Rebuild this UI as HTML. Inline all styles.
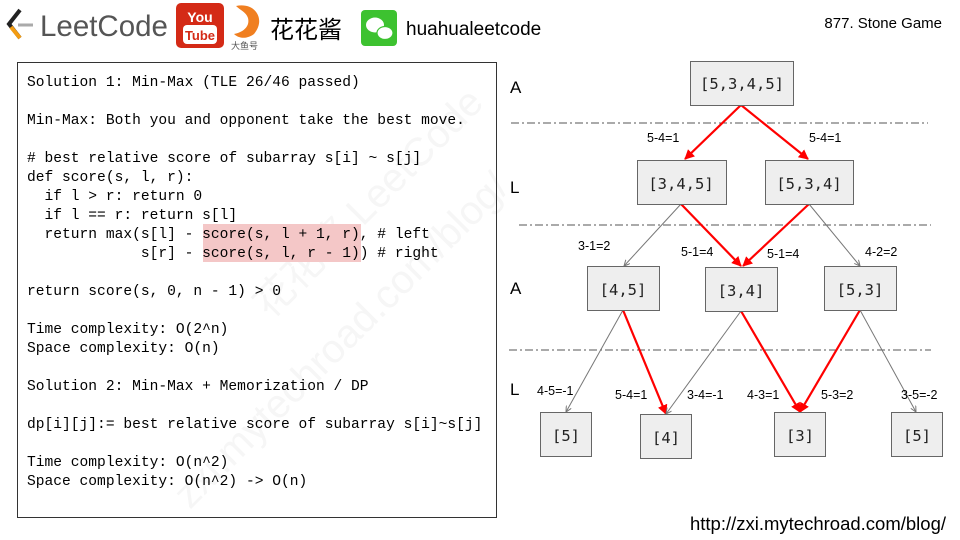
<!DOCTYPE html>
<html><head><meta charset="utf-8"><style>
html,body{margin:0;padding:0;background:#fff;width:960px;height:540px;overflow:hidden}
svg{display:block}
.m{font-family:"Liberation Mono",monospace;font-size:14.6px;fill:#000}
.s{font-family:"Liberation Sans",sans-serif;fill:#000}
.b{fill:#eee;stroke:#666;stroke-width:1}
.bt{font-family:"DejaVu Sans Mono","Liberation Mono",monospace;font-size:15.5px;fill:#222;text-anchor:middle}
.r{stroke:#f00;stroke-width:2.2;fill:none}
.g{stroke:#777;stroke-width:1;fill:none}
.d{stroke:#555;stroke-width:1;stroke-dasharray:8,3,2,3}
.l{font-family:"Liberation Sans",sans-serif;font-size:12.5px;fill:#000}
</style></head><body>
<svg width="960" height="540" xmlns="http://www.w3.org/2000/svg">
<defs>
<marker id="ar" markerWidth="10" markerHeight="10" refX="9" refY="5" orient="auto" markerUnits="userSpaceOnUse" viewBox="0 0 10 10"><path d="M0,0 L10,5 L0,10z" fill="#f00"/></marker>
<marker id="ag" markerWidth="6" markerHeight="6" refX="6" refY="3" orient="auto" markerUnits="userSpaceOnUse" viewBox="0 0 6 6"><path d="M0,0 L6,3 L0,6" fill="none" stroke="#777"/></marker>
</defs>
<!-- header -->
<path d="M20,10 L9,24 L20,38" stroke="#222" stroke-width="4" fill="none"/>
<path d="M11,27 L20,38" stroke="#f39c12" stroke-width="4"/>
<line x1="18" y1="25" x2="33" y2="25" stroke="#aaa" stroke-width="3"/>
<text x="40" y="36" class="s" font-size="29.5" style="fill:#555">LeetCode</text>
<rect x="176" y="3" width="48" height="45" rx="5" fill="#d42a16"/>
<text x="200" y="22" class="s" font-size="14" font-weight="bold" text-anchor="middle" style="fill:#fff">You</text>
<rect x="183" y="25" width="34" height="19" rx="4" fill="#fff"/>
<text x="200" y="40" class="s" font-size="13" font-weight="bold" text-anchor="middle" style="fill:#d42a16">Tube</text>
<path d="M236,6 C256,2 266,20 254,34 C246,40 238,38 234,34 C244,32 250,26 248,18 C246,12 240,10 236,6z" fill="#f07f20"/>
<text x="231" y="49" class="s" font-size="9" style="fill:#555">大鱼号</text>
<text x="270" y="38" font-family="Noto Sans CJK SC,sans-serif" font-size="24" fill="#000">花花酱</text>
<rect x="361" y="10" width="36" height="36" rx="4" fill="#3dc230"/>
<ellipse cx="375" cy="25" rx="9" ry="7.5" fill="#fff"/>
<ellipse cx="385" cy="33" rx="8" ry="6.5" fill="#fff" stroke="#3dc230" stroke-width="1.2"/>
<text x="406" y="35" class="s" font-size="19">huahualeetcode</text>
<text x="942" y="28" class="s" font-size="15" text-anchor="end">877. Stone Game</text>
<!-- watermark -->
<text x="0" y="0" transform="translate(270,320) rotate(-45)" class="s" font-size="40" style="fill:#f6f6f6">花花酱 LeetCode</text>
<text x="0" y="0" transform="translate(190,510) rotate(-45)" class="s" font-size="40" style="fill:#f6f6f6">zxi.mytechroad.com/blog/</text>
<!-- code box -->
<rect x="17.5" y="62.5" width="479" height="455" fill="none" stroke="#333"/>
<rect x="203" y="224" width="158" height="19" fill="#f4c7c7"/>
<rect x="203" y="243" width="158" height="19" fill="#f4c7c7"/>
<text x="27" y="86" class="m">Solution 1: Min-Max (TLE 26/46 passed)</text>
<text x="27" y="124" class="m">Min-Max: Both you and opponent take the best move.</text>
<text x="27" y="162" class="m"># best relative score of subarray s[i] ~ s[j]</text>
<text x="27" y="181" class="m">def score(s, l, r):</text>
<text x="27" y="200" class="m" xml:space="preserve">  if l &gt; r: return 0</text>
<text x="27" y="219" class="m" xml:space="preserve">  if l == r: return s[l]</text>
<text x="27" y="238" class="m" xml:space="preserve">  return max(s[l] - score(s, l + 1, r), # left</text>
<text x="27" y="257" class="m" xml:space="preserve">             s[r] - score(s, l, r - 1)) # right</text>
<text x="27" y="295" class="m">return score(s, 0, n - 1) &gt; 0</text>
<text x="27" y="333" class="m">Time complexity: O(2^n)</text>
<text x="27" y="352" class="m">Space complexity: O(n)</text>
<text x="27" y="390" class="m">Solution 2: Min-Max + Memorization / DP</text>
<text x="27" y="428" class="m">dp[i][j]:= best relative score of subarray s[i]~s[j]</text>
<text x="27" y="466" class="m">Time complexity: O(n^2)</text>
<text x="27" y="485" class="m">Space complexity: O(n^2) -&gt; O(n)</text>
<!-- tree -->
<text x="510" y="93" class="s" font-size="17">A</text>
<text x="510" y="193" class="s" font-size="17">L</text>
<text x="510" y="294" class="s" font-size="17">A</text>
<text x="510" y="395" class="s" font-size="17">L</text>
<line x1="511" y1="123" x2="928" y2="123" class="d"/>
<line x1="519" y1="225" x2="931" y2="225" class="d"/>
<line x1="509" y1="350" x2="931" y2="350" class="d"/>
<line x1="741" y1="105" x2="685" y2="159" class="r" marker-end="url(#ar)"/>
<line x1="741" y1="105" x2="808" y2="159" class="r" marker-end="url(#ar)"/>
<line x1="681" y1="204" x2="624" y2="266" class="g" marker-end="url(#ag)"/>
<line x1="681" y1="204" x2="741" y2="266" class="r" marker-end="url(#ar)"/>
<line x1="809" y1="204" x2="743" y2="266" class="r" marker-end="url(#ar)"/>
<line x1="809" y1="204" x2="860" y2="266" class="g" marker-end="url(#ag)"/>
<line x1="623" y1="310" x2="566" y2="412" class="g" marker-end="url(#ag)"/>
<line x1="623" y1="310" x2="666" y2="414" class="r" marker-end="url(#ar)"/>
<line x1="741" y1="311" x2="666" y2="414" class="g" marker-end="url(#ag)"/>
<line x1="741" y1="311" x2="800" y2="412" class="r" marker-end="url(#ar)"/>
<line x1="860" y1="310" x2="800" y2="412" class="r" marker-end="url(#ar)"/>
<line x1="860" y1="310" x2="916" y2="412" class="g" marker-end="url(#ag)"/>
<rect x="690.5" y="61.5" width="103" height="44" class="b"/><text x="742" y="89" class="bt">[5,3,4,5]</text>
<rect x="637.5" y="160.5" width="89" height="44" class="b"/><text x="681" y="189" class="bt">[3,4,5]</text>
<rect x="765.5" y="160.5" width="88" height="44" class="b"/><text x="809" y="189" class="bt">[5,3,4]</text>
<rect x="587.5" y="266.5" width="72" height="44" class="b"/><text x="623" y="295" class="bt">[4,5]</text>
<rect x="705.5" y="267.5" width="72" height="44" class="b"/><text x="741" y="296" class="bt">[3,4]</text>
<rect x="824.5" y="266.5" width="72" height="44" class="b"/><text x="860" y="295" class="bt">[5,3]</text>
<rect x="540.5" y="412.5" width="51" height="44" class="b"/><text x="566" y="441" class="bt">[5]</text>
<rect x="640.5" y="414.5" width="51" height="44" class="b"/><text x="666" y="443" class="bt">[4]</text>
<rect x="774.5" y="412.5" width="51" height="44" class="b"/><text x="800" y="441" class="bt">[3]</text>
<rect x="891.5" y="412.5" width="51" height="44" class="b"/><text x="917" y="441" class="bt">[5]</text>
<text x="647" y="142" class="l">5-4=1</text>
<text x="809" y="142" class="l">5-4=1</text>
<text x="578" y="250" class="l">3-1=2</text>
<text x="681" y="256" class="l">5-1=4</text>
<text x="767" y="258" class="l">5-1=4</text>
<text x="865" y="256" class="l">4-2=2</text>
<text x="537" y="395" class="l">4-5=-1</text>
<text x="615" y="399" class="l">5-4=1</text>
<text x="687" y="399" class="l">3-4=-1</text>
<text x="747" y="399" class="l">4-3=1</text>
<text x="821" y="399" class="l">5-3=2</text>
<text x="901" y="399" class="l">3-5=-2</text>
<text x="946" y="530" class="s" font-size="18.5" text-anchor="end">http://zxi.mytechroad.com/blog/</text>
</svg>
</body></html>
